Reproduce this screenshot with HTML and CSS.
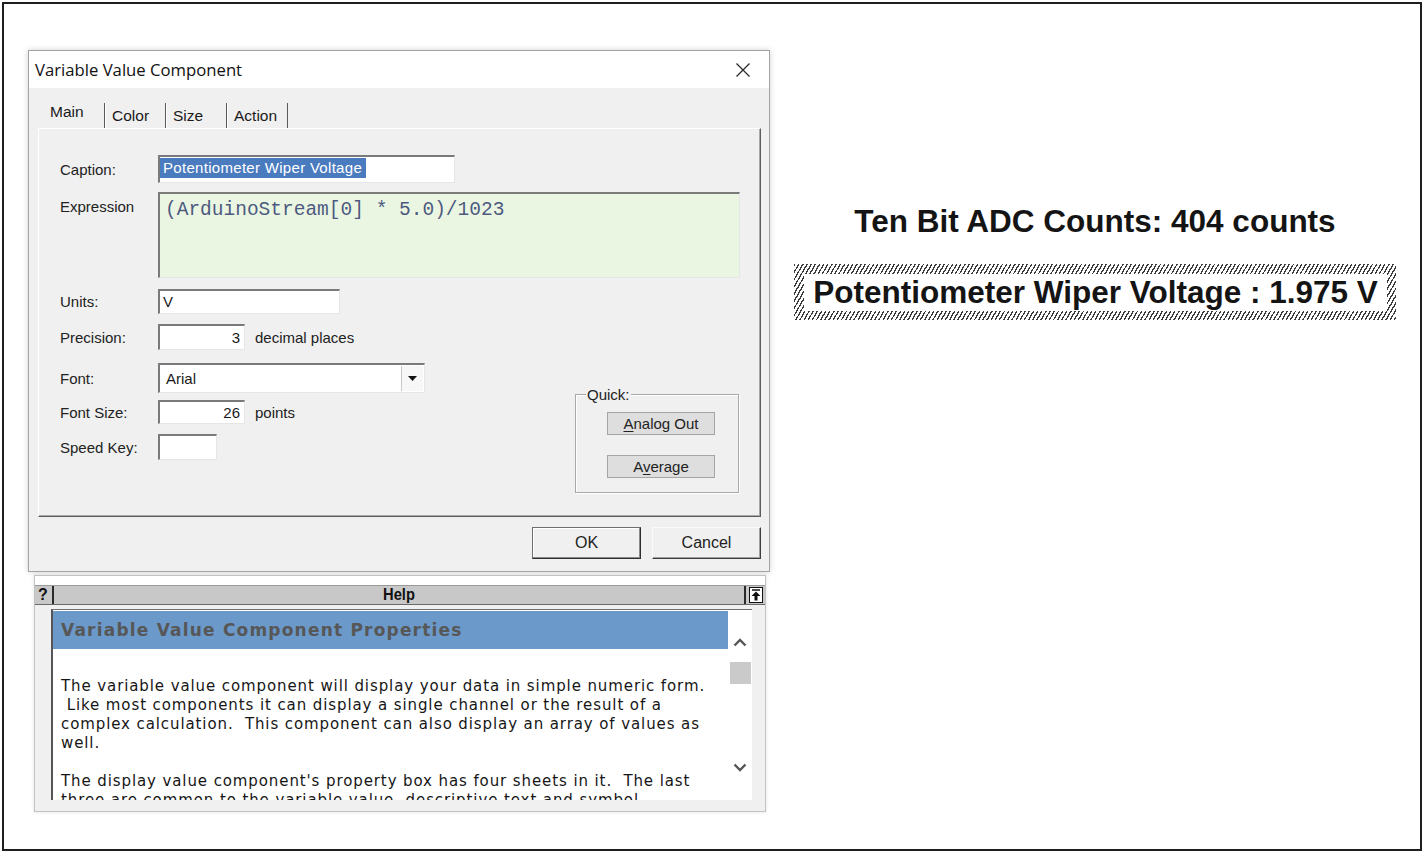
FILE: index.html
```html
<!DOCTYPE html>
<html>
<head>
<meta charset="utf-8">
<title>Variable Value Component</title>
<link rel="stylesheet" href="styles.css">
</head>
<body>
<div class="frame">
  <div class="left">
    <div class="dialog">
      <div class="titlebar">
        <span class="title">Variable Value Component</span>
        <svg class="close" width="16" height="16" viewBox="0 0 16 16"><path d="M1.5 1.5 L14.5 14.5 M14.5 1.5 L1.5 14.5" stroke="#2b2b2b" stroke-width="1.3" fill="none"/></svg>
      </div>
      <div class="dbody">
        <div class="tabs">
          <div class="tab tab-main">Main</div>
          <div class="tab tab-sep">Color</div>
          <div class="tab tab-sep">Size</div>
          <div class="tab tab-sep tab-last">Action</div>
        </div>
        <div class="panel">
          <div class="row r-caption">
            <span class="lbl">Caption:</span>
            <div class="field f-caption"><span class="sel">Potentiometer Wiper Voltage</span></div>
          </div>
          <div class="row r-expr">
            <span class="lbl lbl-top">Expression</span>
            <div class="field f-expr">(ArduinoStream[0] * 5.0)/1023</div>
          </div>
          <div class="lower">
            <div class="lcol">
              <div class="row r-units">
                <span class="lbl">Units:</span>
                <div class="field f-units">V</div>
              </div>
              <div class="row r-prec">
                <span class="lbl">Precision:</span>
                <div class="field f-num">3</div>
                <span class="after">decimal places</span>
              </div>
              <div class="row r-font">
                <span class="lbl">Font:</span>
                <div class="field f-font">
                  <span class="font-val">Arial</span>
                  <span class="drop"><svg width="9" height="5" viewBox="0 0 9 5"><path d="M0 0 H9 L4.5 5 Z" fill="#111"/></svg></span>
                </div>
              </div>
              <div class="row r-fsize">
                <span class="lbl">Font Size:</span>
                <div class="field f-num">26</div>
                <span class="after">points</span>
              </div>
              <div class="row r-speed">
                <span class="lbl">Speed Key:</span>
                <div class="field f-speed"></div>
              </div>
            </div>
            <div class="quick">
              <span class="legend">Quick:</span>
              <div class="qbtn"><u>A</u>nalog Out</div>
              <div class="qbtn qbtn-2">A<u>v</u>erage</div>
            </div>
          </div>
        </div>
        <div class="btnrow">
          <div class="btn btn-ok">OK</div>
          <div class="btn">Cancel</div>
        </div>
      </div>
    </div>
    <div class="help">
      <div class="help-strip"></div>
      <div class="help-bar">
        <span class="help-q">?</span>
        <span class="help-title">Help</span>
        <span class="help-pin"><svg width="14" height="16" viewBox="0 0 14 16"><rect x="0.5" y="0.5" width="13" height="15" fill="#fff" stroke="#111"/><path d="M3 3 H11" stroke="#111" stroke-width="1.5"/><path d="M7 4.5 L2.5 9 H5.5 V13.5 H8.5 V9 H11.5 Z" fill="#111"/></svg></span>
      </div>
      <div class="help-content">
        <div class="help-box">
          <div class="help-main">
            <div class="help-head">Variable Value Component Properties</div>
            <div class="help-text">
              <p>The variable value component will display your data in simple numeric form.<br>&nbsp;Like most components it can display a single channel or the result of a<br>complex calculation.&nbsp; This component can also display an array of values as<br>well.</p>
              <p>The display value component's property box has four sheets in it.&nbsp; The last<br>three are common to the variable value, descriptive text and symbol</p>
            </div>
          </div>
          <div class="scroll">
            <svg class="chev-up" width="14" height="9" viewBox="0 0 14 9"><path d="M1.5 7.5 L7 2 L12.5 7.5" stroke="#555" stroke-width="2.4" fill="none"/></svg>
            <div class="thumb"></div>
            <svg class="chev-down" width="14" height="9" viewBox="0 0 14 9"><path d="M1.5 1.5 L7 7 L12.5 1.5" stroke="#555" stroke-width="2.4" fill="none"/></svg>
          </div>
        </div>
      </div>
    </div>
  </div>
  <div class="right">
    <div class="counts">Ten Bit ADC Counts: 404 counts</div>
    <div class="valbox"><div class="valbox-inner">Potentiometer Wiper Voltage : 1.975 V</div></div>
  </div>
</div>
</body>
</html>
```

FILE: styles.css
```css
* { box-sizing: border-box; }
html, body { margin: 0; padding: 0; background: #fff; }
body { font-family: "Liberation Sans", Arial, sans-serif; color: #1a1a1a; }

.frame {
  margin: 2px;
  width: 1420px;
  height: 849px;
  border: 2px solid #1e1e1e;
  display: flex;
  overflow: hidden;
}

.left {
  width: 766px;
  flex: none;
  padding: 46px 0 0 24px;
}

/* ---------- dialog ---------- */
.dialog {
  width: 742px;
  height: 522px;
  border: 1px solid #a3a3a3;
  background: #f0f0f0;
  box-shadow: 0 0 6px rgba(0,0,0,0.18);
}
.titlebar {
  height: 37px;
  background: #fff;
  display: flex;
  align-items: center;
  justify-content: space-between;
  padding: 0 18px 0 6px;
}
.title {
  font-family: "Open Sans", "Noto Sans", sans-serif;
  font-size: 16.7px;
  color: #111;
}
.close { display: block; }

.dbody { padding: 10px 8px 0 9px; }

.tabs {
  height: 30px;
  display: flex;
  align-items: flex-end;
  padding-left: 6px;
  font-size: 15.5px;
  color: #1a1a1a;
}
.tab {
  height: 25px;
  line-height: 25px;
  padding-left: 7px;
}
.tab-main { width: 60px; height: 30px; line-height: 28px; padding-left: 6px; }
.tab-sep { border-left: 1px solid #5a5a5a; box-shadow: inset 1px 0 #ffffff; width: 61px; }
.tab-last { width: 62px; border-right: 1px solid #5a5a5a; }

.panel {
  height: 389px;
  border-top: 1px solid #ffffff;
  border-left: 1px solid #ffffff;
  border-right: 1px solid #5c5c5c;
  border-bottom: 1px solid #5c5c5c;
  box-shadow: inset -1px -1px 0 #a8a8a8;
  padding: 26px 19px 0 21px;
  font-size: 15px;
}

.row { display: flex; align-items: center; }
.lbl { width: 98px; flex: none; line-height: 17px; color: #222; }
.lbl-top { align-self: flex-start; margin-top: 6px; }
.after { margin-left: 10px; color: #222; }

.field {
  background: #fff;
  border-style: solid;
  border-width: 2px 1px 1px 2px;
  border-color: #7a7a7a #e6e6e6 #e6e6e6 #7a7a7a;
  flex: none;
}

.r-caption { height: 28px; }
.f-caption { width: 297px; height: 28px; padding-top: 1px; }
.sel {
  display: inline-block;
  height: 20px;
  line-height: 20px;
  background: #4a7bbf;
  color: #fff;
  padding: 0 4px 0 3px;
  letter-spacing: 0.3px;
  font-size: 15px;
}

.r-expr { margin-top: 9px; }
.f-expr {
  width: 582px;
  height: 86px;
  background: #ebf6e2;
  font-family: "Liberation Mono", "Courier New", monospace;
  font-size: 19.5px;
  color: #4d5a80;
  padding: 5px 0 0 5px;
  line-height: 22px;
}

.lower { margin-top: 11px; display: flex; }
.lcol { flex: none; }

.r-units { height: 25px; }
.f-units { width: 182px; height: 25px; line-height: 21px; padding-left: 3px; }
.r-prec { height: 26px; margin-top: 10px; }
.f-num { width: 87px; height: 100%; text-align: right; padding-right: 4px; display: flex; align-items: center; justify-content: flex-end; }
.r-font { height: 30px; margin-top: 13px; }
.f-font {
  width: 267px;
  height: 30px;
  display: flex;
  align-items: center;
  justify-content: space-between;
  padding: 0 1px 0 6px;
}
.drop {
  width: 22px;
  height: 25px;
  border-left: 1px solid #c8c8c8;
  display: flex;
  align-items: center;
  justify-content: center;
  background: #f7f7f7;
}
.drop svg { display: block; }
.r-fsize { height: 24px; margin-top: 7px; }
.r-speed { height: 26px; margin-top: 10px; }
.f-speed { width: 59px; height: 26px; }

.quick {
  position: relative;
  margin-left: auto;
  margin-right: 2px;
  margin-top: 105px;
  width: 164px;
  height: 99px;
  border: 1px solid #a9a9a9;
  box-shadow: 1px 1px 0 #ffffff, inset 1px 1px 0 #ffffff;
  padding: 17px 0 0 31px;
}
.legend {
  position: absolute;
  top: -9px;
  left: 10px;
  padding: 0 1px;
  background: #f0f0f0;
  line-height: 17px;
  color: #222;
}
.qbtn {
  width: 108px;
  height: 23px;
  line-height: 21px;
  text-align: center;
  background: #dedede;
  border: 1px solid #a5a5a5;
  color: #222;
}
.qbtn u { text-decoration: underline; text-underline-offset: 2px; }
.qbtn-2 { margin-top: 20px; }

.btnrow {
  display: flex;
  justify-content: flex-end;
  gap: 11px;
  margin-top: 10px;
}
.btn {
  width: 109px;
  height: 32px;
  line-height: 30px;
  text-align: center;
  font-size: 16px;
  color: #222;
  background: #f0f0f0;
  border: 1px solid;
  border-color: #fafafa #3d3d3d #3d3d3d #fafafa;
  box-shadow: inset -1px -1px 0 #a0a0a0;
}
.btn-ok {
  border-color: #707070 #2e2e2e #2e2e2e #707070;
  box-shadow: inset -1px -1px 0 #8a8a8a, inset 1px 1px 0 #ffffff;
}

/* ---------- help panel ---------- */
.help {
  margin: 3px 0 0 6px;
  width: 732px;
  height: 237px;
  background: #f0f0f0;
  border: 1px solid #c2c2c2;
  box-shadow: 0 0 4px rgba(0,0,0,0.12);
}
.help-strip { height: 9px; background: #fff; }
.help-bar {
  height: 20px;
  background: #c8c8c8;
  border-top: 1px solid #9a9a9a;
  border-bottom: 1px solid #6a6a6a;
  display: flex;
  align-items: center;
  font-weight: bold;
  font-size: 16px;
  color: #111;
}
.help-q {
  width: 19px;
  height: 18px;
  line-height: 18px;
  padding-left: 3px;
  border-right: 2px solid #2a2a2a;
}
.help-title { flex: 1; text-align: center; line-height: 18px; transform: scaleX(0.92); }
.help-pin {
  width: 21px;
  height: 18px;
  border-left: 2px solid #2a2a2a;
  display: flex;
  align-items: center;
  justify-content: center;
}
.help-pin svg { display: block; }

.help-content { padding: 4px 13px 0 16px; }
.help-box {
  height: 191px;
  background: #fff;
  border-top: 1px solid #6f6f6f;
  border-left: 2px solid #555;
  display: flex;
  overflow: hidden;
}
.help-main { flex: 1; overflow: hidden; }
.help-head {
  margin-top: 1px;
  height: 38px;
  line-height: 38px;
  background: #6b99c9;
  color: #575757;
  font-family: "DejaVu Sans", Verdana, sans-serif;
  font-weight: bold;
  font-size: 17px;
  letter-spacing: 1.2px;
  padding-left: 8px;
  white-space: nowrap;
}
.help-text {
  padding: 28px 0 0 8px;
  font-family: "DejaVu Sans", Verdana, sans-serif;
  font-size: 15px;
  letter-spacing: 0.9px;
  line-height: 19px;
  color: #161616;
  white-space: nowrap;
}
.help-text p { margin: 0 0 19px 0; }

.scroll {
  width: 24px;
  flex: none;
  display: flex;
  flex-direction: column;
  align-items: center;
  background: #fff;
}
.chev-up { margin-top: 28px; display: block; }
.thumb {
  margin-top: 15px;
  width: 21px;
  height: 22px;
  background: #cacaca;
}
.chev-down { margin-top: auto; margin-bottom: 28px; display: block; }

/* ---------- right side ---------- */
.right {
  flex: 1;
  display: flex;
  flex-direction: column;
  align-items: center;
  padding-top: 199px;
}
.counts {
  font-weight: bold;
  font-size: 31.5px;
  line-height: 36px;
  color: #141414;
  white-space: nowrap;
}
.valbox {
  margin-top: 25px;
  width: 602px;
  height: 56px;
  padding: 10px 9px 9px 10px;
  background: repeating-linear-gradient(120deg, #3c3c3c 0 1.3px, #ffffff 1.3px 3.6px);
}
.valbox-inner {
  height: 37px;
  background: #fff;
  font-weight: bold;
  font-size: 31.5px;
  line-height: 37px;
  text-align: center;
  color: #141414;
  white-space: nowrap;
}
```
